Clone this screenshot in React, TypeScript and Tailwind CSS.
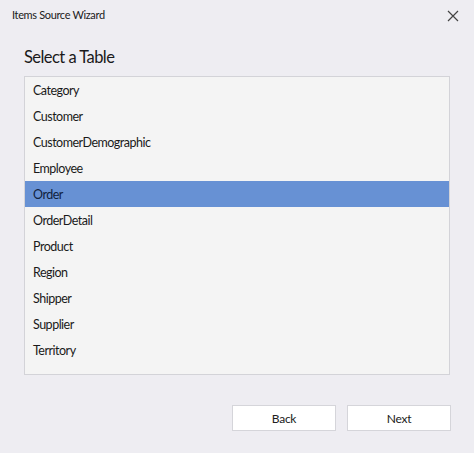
import React from "react";

const items = [
  "Category",
  "Customer",
  "CustomerDemographic",
  "Employee",
  "Order",
  "OrderDetail",
  "Product",
  "Region",
  "Shipper",
  "Supplier",
  "Territory",
];

export default function App() {
  return (
    <div
      className="w-[474px] h-[453px] bg-[#eeedf2] flex flex-col text-[#1a1a1a] overflow-hidden"
      style={{ fontFamily: 'Lato, "Noto Sans", sans-serif' }}
    >
      <div className="h-[31px] flex items-center justify-between pl-[12px] pr-[12px]">
        <span className="text-[11px] tracking-[-0.35px] text-[#202020]">Items Source Wizard</span>
        <svg width="12" height="12" viewBox="0 0 12 12" className="mr-[3px]">
          <path d="M1 1 L11 11 M11 1 L1 11" stroke="#444" strokeWidth="1.2" />
        </svg>
      </div>
      <div className="pl-[24px] pt-[15px] h-[45px] text-[16.5px] tracking-[-0.55px] leading-[22px] text-[#1a1a1a]">
        Select a Table
      </div>
      <div className="ml-[24px] w-[426px] h-[299px] bg-[#f4f4f4] border border-[#d3d3d8] flex flex-col">
        {items.map((it) => (
          <div
            key={it}
            className={
              "h-[26px] shrink-0 flex items-center pl-[8px] pt-[2px] text-[12.5px] tracking-[-0.5px] " +
              (it === "Order" ? "bg-[#6791d4] text-[#10213d]" : "")
            }
          >
            {it}
          </div>
        ))}
      </div>
      <div className="flex justify-end gap-[11px] pr-[23px] mt-[30px]">
        <button className="w-[104px] h-[26px] bg-white border border-[#d5d5da] text-[12px] tracking-[-0.3px] text-[#202020] pt-[1px]">
          Back
        </button>
        <button className="w-[104px] h-[26px] bg-white border border-[#d5d5da] text-[12px] tracking-[-0.3px] text-[#202020] pt-[1px]">
          Next
        </button>
      </div>
    </div>
  );
}
